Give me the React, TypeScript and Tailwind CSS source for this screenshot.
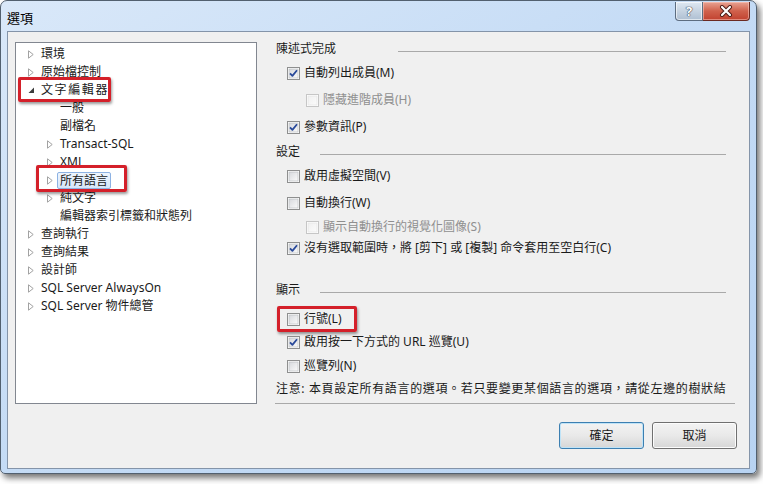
import React from 'react';

const font = "font-['Noto_Sans','Noto_Sans_CJK_TC',sans-serif]";

const Collapsed: React.FC = () => (
  <svg width="6" height="9" viewBox="0 0 6 9" className="shrink-0">
    <path d="M0.5 0.8 L5.2 4.5 L0.5 8.2 Z" fill="#fff" stroke="#a2a2a2" strokeWidth="1" />
  </svg>
);

const Expanded: React.FC = () => (
  <svg width="7" height="7" viewBox="0 0 7 7" className="shrink-0">
    <path d="M6 0.5 L6 6 L0.5 6 Z" fill="#3c3c3c" />
  </svg>
);

type TreeItem = { label: string; level: 0 | 1; arrow?: 'c' | 'e'; selected?: boolean; wide?: boolean };

const tree: TreeItem[] = [
  { label: '環境', level: 0, arrow: 'c' },
  { label: '原始檔控制', level: 0, arrow: 'c' },
  { label: '文字編輯器', level: 0, arrow: 'e', wide: true },
  { label: '一般', level: 1 },
  { label: '副檔名', level: 1 },
  { label: 'Transact-SQL', level: 1, arrow: 'c' },
  { label: 'XML', level: 1, arrow: 'c' },
  { label: '所有語言', level: 1, arrow: 'c', selected: true },
  { label: '純文字', level: 1, arrow: 'c' },
  { label: '編輯器索引標籤和狀態列', level: 1 },
  { label: '查詢執行', level: 0, arrow: 'c' },
  { label: '查詢結果', level: 0, arrow: 'c' },
  { label: '設計師', level: 0, arrow: 'c' },
  { label: 'SQL Server AlwaysOn', level: 0, arrow: 'c' },
  { label: 'SQL Server 物件總管', level: 0, arrow: 'c' },
];

const Checkbox: React.FC<{ checked?: boolean; disabled?: boolean }> = ({ checked, disabled }) => (
  <svg width="13" height="13" viewBox="0 0 13 13" className="shrink-0">
    <defs>
      <linearGradient id={disabled ? 'cbd' : 'cbn'} x1="0" y1="0" x2="1" y2="1">
        <stop offset="0" stopColor={disabled ? '#f0f0f0' : '#d6d8dc'} />
        <stop offset="1" stopColor="#fbfbfb" />
      </linearGradient>
    </defs>
    <rect x="0.5" y="0.5" width="12" height="12" fill="#fff" stroke={disabled ? '#c6c6c6' : '#8e8f8f'} />
    <rect x="2" y="2" width="9" height="9" fill={`url(#${disabled ? 'cbd' : 'cbn'})`} stroke={disabled ? '#e2e2e2' : '#b5b8bd'} strokeWidth="0.6" />
    {checked && (
      <path d="M3 6.3 L5.4 8.9 L10 3.2" fill="none" stroke="#2a4a9a" strokeWidth="1.8" strokeLinejoin="round" />
    )}
  </svg>
);

const CheckRow: React.FC<{ label: string; checked?: boolean; disabled?: boolean; indent?: boolean; mt: string }> = ({
  label,
  checked,
  disabled,
  indent,
  mt,
}) => (
  <div className={`flex items-center h-[16px] gap-[4px] ${indent ? 'ml-[30px]' : 'ml-[11px]'} ${mt}`}>
    <Checkbox checked={checked} disabled={disabled} />
    <span className={`whitespace-nowrap leading-[16px] ${disabled ? 'text-[#8f8f8f]' : 'text-[#1a1a1a]'}`}>{label}</span>
  </div>
);

const Header: React.FC<{ label: string; textW: string; mt?: string }> = ({ label, textW, mt = '' }) => (
  <div className={`flex items-center h-[14px] w-[450px] ${mt}`}>
    <span className={`${textW} shrink-0 whitespace-nowrap leading-[14px] text-[#1a1a1a]`}>{label}</span>
    <div className="flex-1 h-px bg-[#a9a9a9] mt-[5px]" />
  </div>
);

const App: React.FC = () => {
  return (
    <div className={`relative w-[763px] h-[484px] bg-white overflow-hidden text-[12px] ${font}`}>
      {/* window */}
      <div className="w-[757px] h-[474px] flex flex-col rounded-t-[7px] rounded-b-[5px] border border-[#52606f] bg-linear-to-br from-[#d9e8f9] via-[#c4dbf5] to-[#b8d3f2] shadow-[3px_4px_6px_rgba(0,0,0,0.55)]">
        {/* title bar */}
        <div className="h-[30px] flex justify-between">
          <div className="pl-[6px] pt-[9px] leading-[16px] text-[13px] text-black">選項</div>
          <div className="flex mr-[6px] h-[19px] mt-[1px]">
            <div className="w-[28px] h-full flex items-center justify-center rounded-bl-[4px] border border-t-0 border-[#5d6d80] bg-linear-to-b from-[#dfe8f2] via-[#c6d3e1] to-[#aebfd2] shadow-[inset_0_0_0_1px_rgba(255,255,255,0.6)]">
              <span className="text-white font-bold text-[13px] leading-none [text-shadow:0_0_1px_#3b4756,0_0_1px_#3b4756,0_0_1px_#3b4756]">?</span>
            </div>
            <div className="w-[47px] h-full flex items-center justify-center rounded-br-[4px] border border-t-0 border-l-0 border-[#6b2a22] bg-linear-to-b from-[#e7a293] via-[#d0614c] to-[#c1412f] shadow-[inset_0_0_0_1px_rgba(255,210,200,0.5)]">
              <svg width="14" height="12" viewBox="0 0 14 12">
                <path d="M3 2 L11 10 M11 2 L3 10" stroke="#4a1a14" strokeWidth="4" strokeLinecap="round" />
                <path d="M3 2 L11 10 M11 2 L3 10" stroke="#fff" strokeWidth="2.2" strokeLinecap="round" />
              </svg>
            </div>
          </div>
        </div>

        {/* client area */}
        <div className="mx-[6px] h-[438px] border border-[#8494a9] bg-[#f0f0f0] flex flex-col pt-[10px] pl-[7px] pr-[12px]">
          <div className="flex">
            {/* tree */}
            <div className="w-[242px] h-[362px] border border-[#828790] bg-white pt-[2px]">
              {tree.map((t) => (
                <div
                  key={t.label}
                  className={`h-[18px] flex items-center whitespace-nowrap text-[#1a1a1a] ${t.level === 0 ? 'pl-[12px]' : 'pl-[31px]'}`}
                >
                  <div className="w-[13px] flex items-center">
                    {t.arrow === 'c' && <Collapsed />}
                    {t.arrow === 'e' && <Expanded />}
                  </div>
                  {t.selected ? (
                    <span className="-ml-[3px] px-[2px] h-[17px] leading-[15px] border border-[#8db2e3] rounded-[2px] bg-linear-to-b from-[#eef5fd] to-[#d5e6fa]">
                      {t.label}
                    </span>
                  ) : (
                    <span className={`leading-[16px] ${t.wide ? 'tracking-[1.6px]' : ''}`}>{t.label}</span>
                  )}
                </div>
              ))}
            </div>

            {/* right panel */}
            <div className="ml-[18px] w-[460px] h-[362px] border-b border-[#a9a9a9] pl-[1px] flex flex-col">
              <Header label="陳述式完成" textW="w-[122px]" />
              <CheckRow label="自動列出成員(M)" checked mt="mt-[9px]" />
              <CheckRow label="隱藏進階成員(H)" disabled indent mt="mt-[11px]" />
              <CheckRow label="參數資訊(P)" checked mt="mt-[11px]" />
              <Header label="設定" textW="w-[44px]" mt="mt-[10px]" />
              <CheckRow label="啟用虛擬空間(V)" mt="mt-[9px]" />
              <CheckRow label="自動換行(W)" mt="mt-[11px]" />
              <CheckRow label="顯示自動換行的視覺化圖像(S)" disabled indent mt="mt-[8px]" />
              <CheckRow label="沒有選取範圍時，將 [剪下] 或 [複製] 命令套用至空白行(C)" checked mt="mt-[5px]" />
              <Header label="顯示" textW="w-[44px]" mt="mt-[27px]" />
              <CheckRow label="行號(L)" mt="mt-[14px]" />
              <CheckRow label="啟用按一下方式的 URL 巡覽(U)" checked mt="mt-[7px]" />
              <CheckRow label="巡覽列(N)" mt="mt-[8px]" />
              <div className="mt-[7px] h-[16px] w-[452px] overflow-hidden whitespace-nowrap leading-[16px] tracking-[0.65px] text-[#1a1a1a]">
                注意: 本頁設定所有語言的選項。若只要變更某個語言的選項，請從左邊的樹狀結
              </div>
            </div>
          </div>

          {/* buttons */}
          <div className="flex justify-end gap-[8px] mt-[18px]">
            <button className="w-[85px] h-[27px] rounded-[3px] border border-[#3c7fb1] bg-linear-to-b from-[#f3f3f3] via-[#e9e9e9] to-[#d6d6d6] shadow-[inset_0_0_0_1px_#bfe3f7] text-[#1a1a1a]">
              確定
            </button>
            <button className="w-[85px] h-[27px] rounded-[3px] border border-[#707070] bg-linear-to-b from-[#f3f3f3] via-[#e9e9e9] to-[#d6d6d6] shadow-[inset_0_0_0_1px_#fcfcfc] text-[#1a1a1a]">
              取消
            </button>
          </div>
        </div>
      </div>

      {/* red annotation boxes */}
      <div className="absolute left-[18px] top-[77px] w-[93px] h-[25px] border-[3px] border-[#d4202a] rounded-[2px] shadow-[1px_2px_3px_rgba(0,0,0,0.4)]" />
      <div className="absolute left-[36px] top-[165px] w-[91px] h-[27px] border-[3px] border-[#d4202a] rounded-[2px] shadow-[1px_2px_3px_rgba(0,0,0,0.4)]" />
      <div className="absolute left-[277px] top-[306px] w-[80px] h-[26px] border-[3px] border-[#d4202a] rounded-[2px] shadow-[1px_2px_3px_rgba(0,0,0,0.4)]" />
    </div>
  );
};

export default App;
